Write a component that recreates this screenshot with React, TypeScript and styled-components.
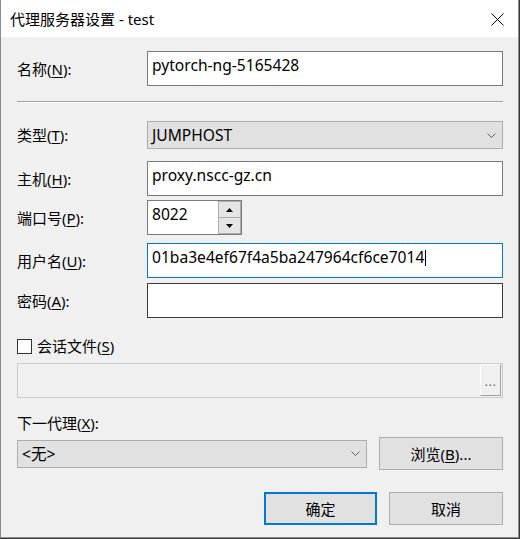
import React from "react";
import styled, { createGlobalStyle } from "styled-components";

const Global = createGlobalStyle`
  html, body {
    margin: 0;
    padding: 0;
    background: #3a3a3a;
  }
  body {
    font-family: "Noto Sans", "Noto Sans CJK SC", sans-serif;
    font-size: 15px;
    color: #000;
  }
`;

const Window = styled.div`
  width: 519px;
  height: 538px;
  box-sizing: border-box;
  border: 1px solid #8c8c8c;
  border-top: none;
  display: flex;
  flex-direction: column;
  background: #f0f0f0;
`;

const TitleBar = styled.div`
  height: 37px;
  flex: none;
  display: flex;
  align-items: center;
  padding-left: 9px;
  background: #fff;
  line-height: 20px;
`;

const Title = styled.span`
  font-size: 15px;
  margin-top: 1px;
`;

const CloseButton = styled.div`
  margin-left: auto;
  width: 42px;
  height: 37px;
  display: flex;
  align-items: center;
  justify-content: center;
  margin-top: 1px;
`;

const Body = styled.div`
  flex: 1;
  display: flex;
  flex-direction: column;
  padding: 0 15px 0 16px;
`;

const FieldRow = styled.div<{ $top: number; $h: number }>`
  display: grid;
  grid-template-columns: 130px 1fr;
  align-items: center;
  margin-top: ${(p) => p.$top}px;
  height: ${(p) => p.$h}px;
`;

const Label = styled.div`
  line-height: 20px;
  white-space: nowrap;
`;

const Mn = styled.span`
  text-decoration: underline;
  text-underline-offset: 2px;
`;

const Separator = styled.div`
  margin-top: 15px;
  height: 0;
  border-top: 1px solid #a0a0a0;
  border-bottom: 1px solid #ffffff;
`;

type EditState = "normal" | "hover" | "focus";

const editBorder: Record<EditState, string> = {
  normal: "#7a7a7a",
  hover: "#3c3c3c",
  focus: "#0078d7",
};

const Edit = styled.div<{ $state?: EditState }>`
  box-sizing: border-box;
  height: 35px;
  border: 1px solid ${(p) => editBorder[p.$state ?? "normal"]};
  background: #fff;
  padding: 3px 4px 0;
  font-size: 15.6px;
  line-height: 20px;
  white-space: nowrap;
  overflow: hidden;
`;

const Caret = styled.span`
  display: inline-block;
  width: 1px;
  height: 16px;
  background: #000;
  vertical-align: -3px;
  margin-left: 1px;
`;

const Combo = styled.div<{ $w?: number }>`
  box-sizing: border-box;
  height: 28px;
  width: ${(p) => (p.$w ? `${p.$w}px` : "auto")};
  border: 1px solid #adadad;
  background: #e1e1e1;
  display: flex;
  align-items: center;
  padding: 0 6px 0 4px;
  font-size: 15.6px;
  line-height: 20px;
`;

const ComboText = styled.span`
  flex: 1;
`;

const SpinBox = styled.div`
  box-sizing: border-box;
  width: 95px;
  height: 35px;
  border: 1px solid #7a7a7a;
  background: #fff;
  display: flex;
`;

const SpinText = styled.div`
  flex: 1;
  padding: 3px 4px 0;
  font-size: 15.6px;
  line-height: 20px;
`;

const SpinColumn = styled.div`
  width: 22px;
  display: flex;
  flex-direction: column;
  border-left: 1px solid #adadad;
`;

const SpinButton = styled.div`
  flex: 1;
  box-sizing: border-box;
  border: 1px solid #adadad;
  border-left: none;
  background: #e5e5e5;
  display: flex;
  align-items: center;
  justify-content: center;
  & + & {
    border-top: none;
  }
`;

const CheckRow = styled.label`
  display: flex;
  align-items: center;
  gap: 5px;
  margin-top: 20px;
  height: 16px;
  line-height: 20px;
`;

const CheckBox = styled.span`
  box-sizing: border-box;
  width: 15px;
  height: 15px;
  border: 1px solid #333;
  background: #fff;
`;

const FileBox = styled.div`
  box-sizing: border-box;
  margin-top: 9px;
  height: 35px;
  border: 1px solid #cccccc;
  background: #f0f0f0;
  display: flex;
  justify-content: flex-end;
  padding: 0 1px 1px 0;
`;

const FileButton = styled.div`
  box-sizing: border-box;
  width: 21px;
  border-top: 1px solid #fff;
  border-left: 1px solid #fff;
  border-right: 1px solid #a0a0a0;
  border-bottom: 1px solid #a0a0a0;
  display: flex;
  align-items: flex-end;
  justify-content: center;
  color: #6d6d6d;
  font-size: 13px;
  line-height: 20px;
  padding-bottom: 4px;
  letter-spacing: 0.5px;
`;

const SectionLabel = styled.div`
  margin-top: 15px;
  height: 20px;
  line-height: 20px;
`;

const ProxyRow = styled.div`
  margin-top: 4px;
  height: 33px;
  display: flex;
  align-items: center;
  justify-content: space-between;
`;

const PushButton = styled.div<{ $w: number; $default?: boolean }>`
  box-sizing: border-box;
  width: ${(p) => p.$w}px;
  height: 33px;
  border: ${(p) => (p.$default ? "2px solid #0078d7" : "1px solid #adadad")};
  background: #e1e1e1;
  display: flex;
  align-items: center;
  justify-content: center;
  line-height: 20px;
`;

const ButtonRow = styled.div`
  margin-top: 22px;
  display: flex;
  justify-content: flex-end;
  gap: 12px;
`;

const Chevron = () => (
  <svg width="9" height="5" viewBox="0 0 9 5">
    <path d="M0.5 0.5 L4.5 4.5 L8.5 0.5" fill="none" stroke="#606060" strokeWidth="1" />
  </svg>
);

const Tri = ({ up }: { up?: boolean }) => (
  <svg width="7" height="4" viewBox="0 0 7 4">
    <path d={up ? "M3.5 0 L7 4 L0 4 Z" : "M0 0 L7 0 L3.5 4 Z"} fill="#000" />
  </svg>
);

export default function App() {
  return (
    <>
      <Global />
      <Window>
        <TitleBar>
          <Title>代理服务器设置 - test</Title>
          <CloseButton>
            <svg width="13" height="13" viewBox="0 0 13 13">
              <path d="M0.5 0.5 L12.5 12.5 M12.5 0.5 L0.5 12.5" stroke="#000" strokeWidth="1" />
            </svg>
          </CloseButton>
        </TitleBar>
        <Body>
          <FieldRow $top={14} $h={35}>
            <Label>
              名称(<Mn>N</Mn>):
            </Label>
            <Edit>pytorch-ng-5165428</Edit>
          </FieldRow>

          <Separator />

          <FieldRow $top={18} $h={28}>
            <Label>
              类型(<Mn>T</Mn>):
            </Label>
            <Combo>
              <ComboText>JUMPHOST</ComboText>
              <Chevron />
            </Combo>
          </FieldRow>

          <FieldRow $top={12} $h={35}>
            <Label>
              主机(<Mn>H</Mn>):
            </Label>
            <Edit>proxy.nscc-gz.cn</Edit>
          </FieldRow>

          <FieldRow $top={4} $h={35}>
            <Label>
              端口号(<Mn>P</Mn>):
            </Label>
            <SpinBox>
              <SpinText>8022</SpinText>
              <SpinColumn>
                <SpinButton>
                  <Tri up />
                </SpinButton>
                <SpinButton>
                  <Tri />
                </SpinButton>
              </SpinColumn>
            </SpinBox>
          </FieldRow>

          <FieldRow $top={8} $h={35}>
            <Label>
              用户名(<Mn>U</Mn>):
            </Label>
            <Edit $state="focus">
              01ba3e4ef67f4a5ba247964cf6ce7014
              <Caret />
            </Edit>
          </FieldRow>

          <FieldRow $top={5} $h={35}>
            <Label>
              密码(<Mn>A</Mn>):
            </Label>
            <Edit $state="hover" />
          </FieldRow>

          <CheckRow>
            <CheckBox />
            <span>
              会话文件(<Mn>S</Mn>)
            </span>
          </CheckRow>

          <FileBox>
            <FileButton>...</FileButton>
          </FileBox>

          <SectionLabel>
            下一代理(<Mn>X</Mn>):
          </SectionLabel>

          <ProxyRow>
            <Combo $w={350}>
              <ComboText>&lt;无&gt;</ComboText>
              <Chevron />
            </Combo>
            <PushButton $w={124}>
              浏览(<Mn>B</Mn>)...
            </PushButton>
          </ProxyRow>

          <ButtonRow>
            <PushButton $w={113} $default>
              确定
            </PushButton>
            <PushButton $w={114}>取消</PushButton>
          </ButtonRow>
        </Body>
      </Window>
    </>
  );
}
